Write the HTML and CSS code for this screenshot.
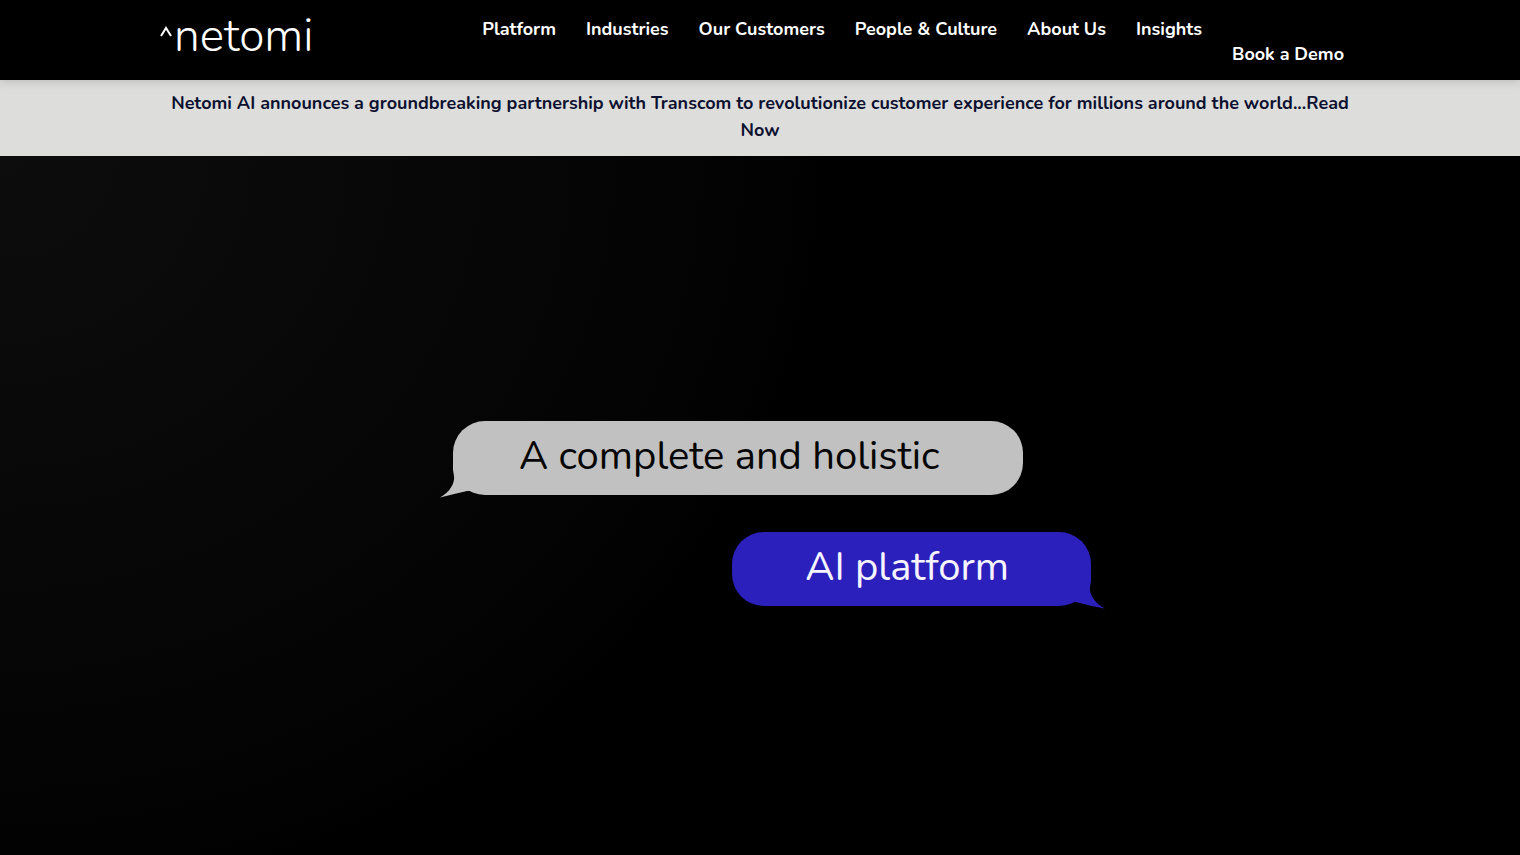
FILE: index.html
```html
<!DOCTYPE html>
<html lang="en">
<head>
<meta charset="utf-8">
<meta name="viewport" content="width=device-width, initial-scale=1">
<title>Netomi</title>
<link rel="stylesheet" href="styles.css">
</head>
<body>
<header class="header">
  <div class="header-inner">
    <a class="logo" href="#">
      <svg class="logo-caret" viewBox="0 0 14 12" aria-hidden="true"><path d="M1 10 6 2l5 8" fill="none" stroke="currentColor" stroke-width="2"/></svg>
      <span class="logo-name">netomi</span>
    </a>
    <nav class="nav">
      <a href="#">Platform</a>
      <a href="#">Industries</a>
      <a href="#">Our Customers</a>
      <a href="#">People &amp; Culture</a>
      <a href="#">About Us</a>
      <a href="#">Insights</a>
      <a class="nav-demo" href="#">Book a Demo</a>
    </nav>
  </div>
</header>
<div class="banner">
  <a class="banner-text" href="#">Netomi AI announces a groundbreaking partnership with Transcom to revolutionize customer experience for millions around the world...Read Now</a>
</div>
<main class="hero">
  <div class="chat">
    <div class="bubble bubble-grey">
      <svg class="tail tail-left" viewBox="0 0 30 42" aria-hidden="true"><path d="M13 0V14L14 20C15 27 10 36 0 41.500Q14 38 27 35H30V0z" fill="currentColor"/></svg>
      <span class="bubble-text">A complete and holistic</span>
    </div>
    <div class="bubble bubble-blue">
      <svg class="tail tail-right" viewBox="0 0 30 42" aria-hidden="true"><path d="M16 0V14L15 20C14 27 20 37 30 41.500Q15 39 1 35H0V0z" fill="currentColor"/></svg>
      <span class="bubble-text">AI platform</span>
    </div>
  </div>
</main>
</body>
</html>
```
FILE: styles.css
```css
* { box-sizing: border-box; }

body {
  margin: 0;
  min-height: 100vh;
  display: flex;
  flex-direction: column;
  background: #000;
  color: #fff;
  font-family: Nunito, "Open Sans", "Noto Sans", sans-serif;
  font-size: 18px;
}

a { color: inherit; text-decoration: none; }

.header {
  position: relative;
  z-index: 1;
  background: #000;
  box-shadow: 0 0 10px rgba(0, 0, 0, 0.2);
}

.header-inner {
  max-width: 1200px;
  min-height: 80px;
  margin: 0 auto;
  padding: 17px 16px 13px 0;
  display: flex;
  justify-content: space-between;
}

.logo {
  display: flex;
  align-items: flex-start;
}

.logo-caret { width: 14px; height: 12px; margin-top: 9px; }

.logo-name {
  font-size: 46px;
  font-weight: 300;
  line-height: 38px;
}

.nav {
  display: flex;
  gap: 30px;
  line-height: 25px;
  font-weight: 700;
  white-space: nowrap;
}

.nav-demo { align-self: flex-end; }

.banner {
  background: #dddddb;
  color: #0d1130;
  padding: 10px 0 12px;
}

.banner-text {
  display: block;
  max-width: 1200px;
  margin: 0 auto;
  padding: 0 10px;
  text-align: center;
  font-weight: 700;
  line-height: 27px;
}

.hero {
  flex: 1;
  display: flex;
  flex-direction: column;
  align-items: center;
  justify-content: center;
  padding: 16px 0 0 24px;
  background: radial-gradient(820px 740px at 0 0, #0d0d0d 0, #080808 45%, #040404 80%, #020202 96%, #000 100%);
}

.chat {
  width: 638px;
  max-width: 90%;
  display: flex;
  flex-direction: column;
  gap: 37px;
}

.bubble {
  position: relative;
  padding: 10px 84px 14px 66px;
  border-radius: 32px;
  font-size: 40px;
  line-height: 50px;
  white-space: nowrap;
}

.bubble-text { position: relative; }

.bubble-grey {
  align-self: flex-start;
  background: #c1c1c1;
  color: #050505;
}

.bubble-blue {
  align-self: flex-end;
  padding: 10px 82px 14px 73px;
  background: #2c20bc;
  color: #f6f4ff;
}

.tail { position: absolute; bottom: -3px; width: 30px; height: 42px; }
.tail-left { left: -13px; color: #c1c1c1; }
.tail-right { right: -14px; color: #2c20bc; }
```
